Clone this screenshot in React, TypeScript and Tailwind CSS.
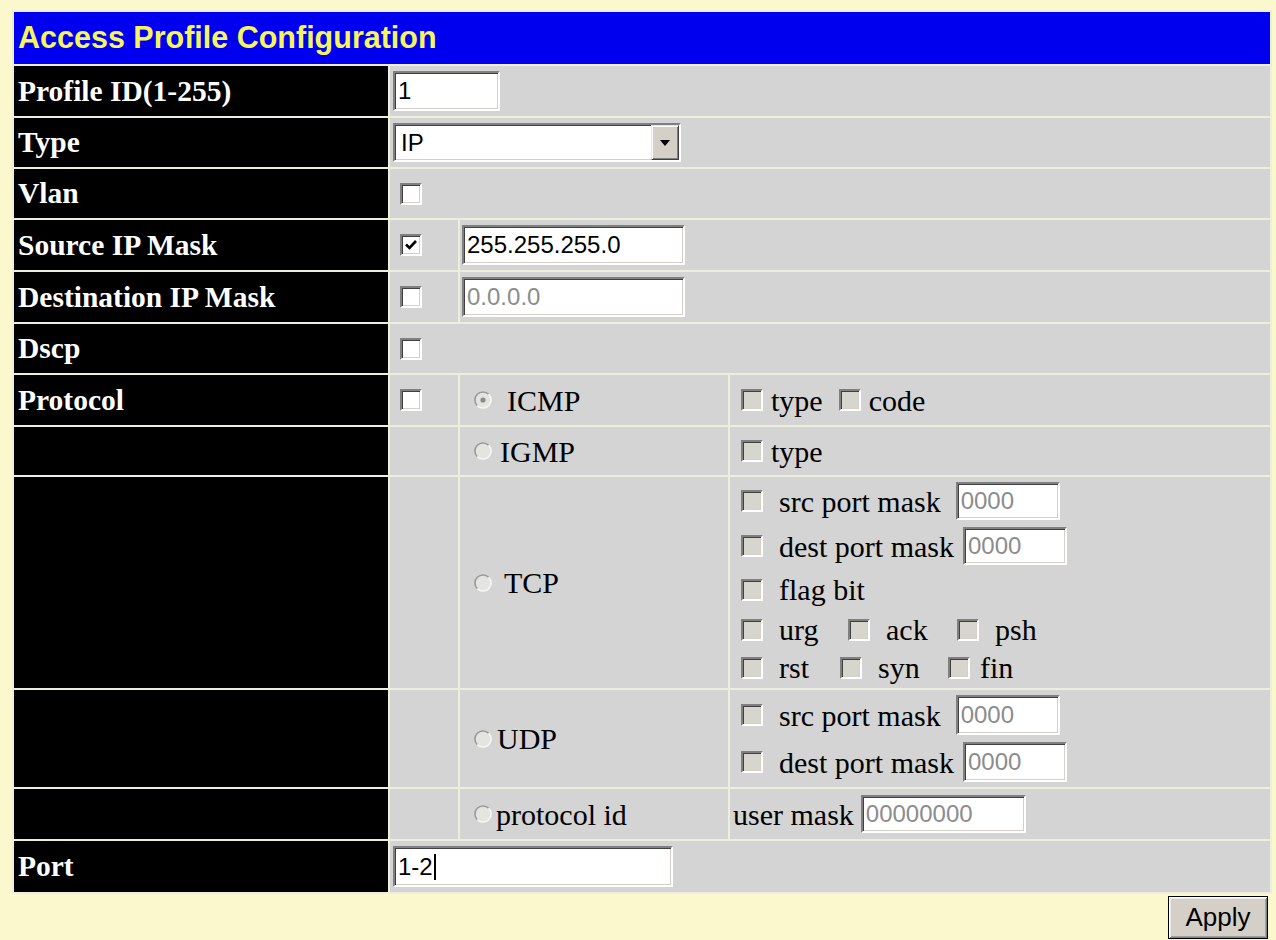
import React from "react";

const serif = "font-['Liberation_Serif','Times_New_Roman',serif]";
const sans = "font-['Liberation_Sans',Arial,sans-serif]";

const labelCell = `${serif} flex items-center bg-black pl-[4px] text-[29.5px] font-bold text-white`;
const valueCell = `${serif} flex items-center bg-[#d4d4d4] text-[30px] text-black`;

// classic sunken 3D edge used by text boxes and check boxes
const sunken =
  "border-2 border-t-[#808080] border-l-[#808080] border-b-white border-r-white shadow-[inset_1px_1px_0_#404040,inset_-1px_-1px_0_#d4d0c8]";
const raised =
  "border border-t-[#e8e8e8] border-l-[#e8e8e8] border-b-[#404040] border-r-[#404040] shadow-[inset_1px_1px_0_#ffffff,inset_-1px_-1px_0_#808080]";

function CheckBox({ checked = false, disabled = false }: { checked?: boolean; disabled?: boolean }) {
  return (
    <span
      className={`inline-flex h-[22px] w-[22px] shrink-0 items-center justify-center ${sunken} ${
        disabled ? "bg-[#d6d6cf]" : "bg-white"
      }`}
    >
      {checked && (
        <svg width="14" height="14" viewBox="0 0 14 14">
          <path d="M2 6.5 L5.5 10 L12 3" fill="none" stroke="#000" strokeWidth="2.6" />
        </svg>
      )}
    </span>
  );
}

function Radio({ checked = false }: { checked?: boolean }) {
  return (
    <svg width="18" height="18" viewBox="0 0 18 18" className="shrink-0">
      <circle cx="9" cy="9" r="8" fill="#e4e4e0" />
      <path d="M14.7 3.3 A8 8 0 0 0 3.3 14.7" fill="none" stroke="#9a9a9a" strokeWidth="1.6" />
      <path d="M3.3 14.7 A8 8 0 0 0 14.7 3.3" fill="none" stroke="#f6f6f6" strokeWidth="1.6" />
      {checked && <circle cx="9" cy="9" r="2.6" fill="#8a8a8a" />}
    </svg>
  );
}

function Field({
  value,
  className = "",
  muted = false,
  caret = false,
}: {
  value: string;
  className?: string;
  muted?: boolean;
  caret?: boolean;
}) {
  return (
    <div
      className={`${sunken} ${sans} flex shrink-0 items-center bg-white pl-[3px] text-[24px] ${
        muted ? "text-[#8c8c8c]" : "text-black"
      } ${className}`}
    >
      {value}
      {caret && <span className="ml-[1px] inline-block h-[26px] w-[2px] bg-black" />}
    </div>
  );
}

function Select({ value }: { value: string }) {
  return (
    <div className={`${sunken} ${sans} flex h-[39px] w-[288px] items-center bg-white text-[24px]`}>
      <span className="flex-1 pl-[6px]">{value}</span>
      <span className={`${raised} flex h-full w-[28px] items-center justify-center bg-[#d4d0c8]`}>
        <svg width="10" height="6" viewBox="0 0 10 6">
          <path d="M0 0 H10 L5 6 Z" fill="#000" />
        </svg>
      </span>
    </div>
  );
}

function Opt({ label, gap = "ml-[16px]", className = "" }: { label: string; gap?: string; className?: string }) {
  return (
    <span className={`flex items-center ${className}`}>
      <CheckBox disabled />
      <span className={gap}>{label}</span>
    </span>
  );
}

export default function App() {
  return (
    <div className="min-h-[940px] w-[1276px] overflow-hidden bg-[#fcf8cd] pt-[10px]">
      <div className="ml-[12px] grid w-[1260px] grid-cols-[374px_68px_268px_540px] grid-rows-[52px_50px_49px_49px_50px_50px_49px_50px_48px_211px_97px_50px_51px] gap-[2px] bg-[#eeeedf] p-[2px]">
        {/* title bar */}
        <div className={`${sans} col-span-4 flex items-center bg-[#0000ee] pl-[4px] text-[30.5px] font-bold text-[#f6f65c]`}>
          Access Profile Configuration
        </div>

        <div className={labelCell}>Profile ID(1-255)</div>
        <div className={`${valueCell} col-span-3 pl-[3px]`}>
          <Field value="1" className="h-[40px] w-[107px]" />
        </div>

        <div className={labelCell}>Type</div>
        <div className={`${valueCell} col-span-3 pl-[3px]`}>
          <Select value="IP" />
        </div>

        <div className={labelCell}>Vlan</div>
        <div className={`${valueCell} col-span-3 pl-[10px]`}>
          <CheckBox />
        </div>

        <div className={labelCell}>Source IP Mask</div>
        <div className={`${valueCell} pl-[10px]`}>
          <CheckBox checked />
        </div>
        <div className={`${valueCell} col-span-2 pl-[2px]`}>
          <Field value="255.255.255.0" className="h-[40px] w-[223px]" />
        </div>

        <div className={labelCell}>Destination IP Mask</div>
        <div className={`${valueCell} pl-[10px]`}>
          <CheckBox />
        </div>
        <div className={`${valueCell} col-span-2 pl-[2px]`}>
          <Field value="0.0.0.0" muted className="h-[40px] w-[223px]" />
        </div>

        <div className={labelCell}>Dscp</div>
        <div className={`${valueCell} col-span-3 pl-[10px]`}>
          <CheckBox />
        </div>

        {/* protocol block */}
        <div className={labelCell}>Protocol</div>
        <div className={`${valueCell} pl-[10px]`}>
          <CheckBox />
        </div>
        <div className={`${valueCell} pl-[14px]`}>
          <Radio checked />
          <span className="ml-[15px]">ICMP</span>
        </div>
        <div className={`${valueCell} pl-[11px]`}>
          <CheckBox disabled />
          <span className="ml-[8px]">type</span>
          <span className="ml-[16px]">
            <CheckBox disabled />
          </span>
          <span className="ml-[8px]">code</span>
        </div>

        <div className="bg-black" />
        <div className="bg-[#d4d4d4]" />
        <div className={`${valueCell} pl-[14px]`}>
          <Radio />
          <span className="ml-[8px]">IGMP</span>
        </div>
        <div className={`${valueCell} pl-[11px]`}>
          <CheckBox disabled />
          <span className="ml-[8px]">type</span>
        </div>

        <div className="bg-black" />
        <div className="bg-[#d4d4d4]" />
        <div className={`${valueCell} pl-[14px]`}>
          <Radio />
          <span className="ml-[12px]">TCP</span>
        </div>
        <div className={`${serif} flex flex-col justify-center bg-[#d4d4d4] pl-[11px] text-[30px]`}>
          <div className="flex h-[45px] items-center">
            <Opt label="src port mask" />
            <Field value="0000" muted className="ml-[15px] h-[38px] w-[104px]" />
          </div>
          <div className="flex h-[45px] items-center">
            <Opt label="dest port mask" />
            <Field value="0000" muted className="ml-[9px] h-[38px] w-[104px]" />
          </div>
          <div className="flex h-[42px] items-center">
            <Opt label="flag bit" />
          </div>
          <div className="flex h-[38px] items-center">
            <Opt label="urg" className="w-[107px]" />
            <Opt label="ack" className="w-[109px]" />
            <Opt label="psh" />
          </div>
          <div className="flex h-[38px] items-center">
            <Opt label="rst" className="w-[99px]" />
            <Opt label="syn" className="w-[108px]" />
            <Opt label="fin" gap="ml-[10px]" />
          </div>
        </div>

        <div className="bg-black" />
        <div className="bg-[#d4d4d4]" />
        <div className={`${valueCell} pl-[14px]`}>
          <Radio />
          <span className="ml-[5px]">UDP</span>
        </div>
        <div className={`${serif} flex flex-col justify-center bg-[#d4d4d4] pl-[11px] text-[30px]`}>
          <div className="flex h-[47px] items-center">
            <Opt label="src port mask" />
            <Field value="0000" muted className="ml-[15px] h-[40px] w-[104px]" />
          </div>
          <div className="flex h-[47px] items-center">
            <Opt label="dest port mask" />
            <Field value="0000" muted className="ml-[9px] h-[40px] w-[104px]" />
          </div>
        </div>

        <div className="bg-black" />
        <div className="bg-[#d4d4d4]" />
        <div className={`${valueCell} pl-[14px]`}>
          <Radio />
          <span className="ml-[4px]">protocol id</span>
        </div>
        <div className={`${valueCell} pl-[3px]`}>
          <span>user mask</span>
          <Field value="00000000" muted className="ml-[7px] h-[38px] w-[165px]" />
        </div>

        <div className={labelCell}>Port</div>
        <div className={`${valueCell} col-span-3 pl-[3px]`}>
          <Field value="1-2" caret className="h-[41px] w-[280px]" />
        </div>
      </div>

      <div className="ml-[12px] mt-[2px] flex w-[1260px] justify-end pr-[4px]">
        <button
          className={`${sans} h-[43px] w-[100px] border border-black bg-[#d4d0c8] text-[26px] text-black shadow-[inset_1px_1px_0_#ffffff,inset_-1px_-1px_0_#808080,inset_2px_2px_0_#e8e8e8,inset_-2px_-2px_0_#a0a0a0]`}
        >
          Apply
        </button>
      </div>
    </div>
  );
}
